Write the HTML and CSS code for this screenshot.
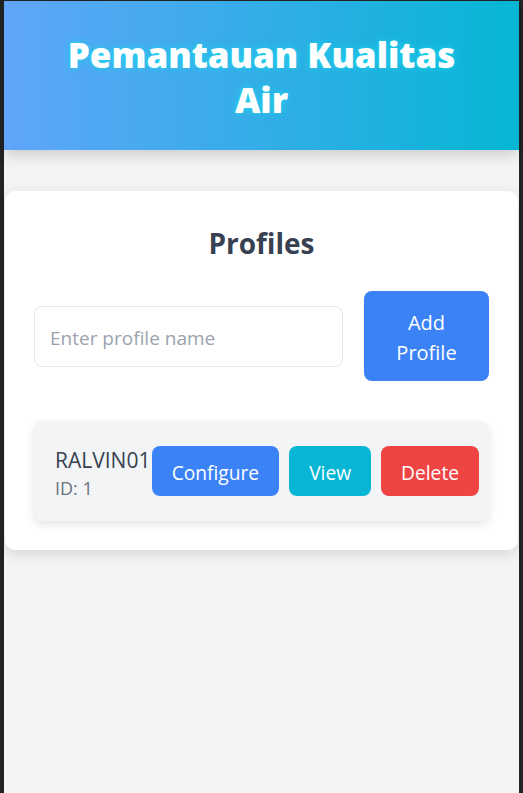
FILE: index.html
```html
<!DOCTYPE html>
<html lang="id">
<head>
<meta charset="utf-8">
<title>Pemantauan Kualitas Air</title>
<link rel="stylesheet" href="styles.css">
</head>
<body>
<div class="screen">
  <header class="header">
    <h1 class="title">Pemantauan Kualitas Air</h1>
  </header>
  <main class="main">
    <section class="card">
      <h2 class="card-title">Profiles</h2>
      <div class="add-row">
        <input class="name-input" type="text" placeholder="Enter profile name">
        <button class="btn btn-blue add-btn">Add Profile</button>
      </div>
      <ul class="profile-list">
        <li class="profile-item">
          <div class="profile-info">
            <div class="profile-name">RALVIN01</div>
            <div class="profile-id">ID: 1</div>
          </div>
          <div class="profile-actions">
            <button class="btn btn-blue">Configure</button>
            <button class="btn btn-cyan">View</button>
            <button class="btn btn-red">Delete</button>
          </div>
        </li>
      </ul>
    </section>
  </main>
</div>
</body>
</html>
```
FILE: styles.css
```css
* { box-sizing: border-box; }
html, body { margin: 0; padding: 0; height: 100%; }
body {
  background: #232323;
  font-family: "Open Sans", "Noto Sans", sans-serif;
}
.screen {
  margin: 1px 4px 0 4px;
  min-height: calc(100% - 1px);
  background: #f3f4f6;
}
.header {
  background: linear-gradient(90deg, #60a5fa 0%, #06b6d4 100%);
  padding: 31px 50px 28px;
  box-shadow: 0 4px 14px rgba(0, 0, 0, 0.18);
  position: relative;
}
.title {
  margin: 0;
  text-align: center;
  color: #ffffff;
  font-size: 35px;
  line-height: 45px;
  font-weight: 800;
  text-shadow: 0 0 8px rgba(34, 211, 238, 0.9), 0 0 3px rgba(34, 211, 238, 0.8);
}
.main {
  padding: 41px 1px 0;
}
.card {
  background: #ffffff;
  border-radius: 10px;
  padding: 33px 29px 29px;
  box-shadow: 0 4px 14px rgba(0, 0, 0, 0.12);
}
.card-title {
  margin: 0 0 29px;
  text-align: center;
  color: #374151;
  font-size: 28px;
  line-height: 38px;
  font-weight: 700;
}
.add-row {
  display: flex;
  align-items: center;
  gap: 21px;
}
.name-input {
  flex: 1;
  min-width: 0;
  height: 61px;
  border: 1px solid #e5e7eb;
  border-radius: 8px;
  padding: 3px 15px 0;
  font-family: inherit;
  font-size: 19px;
  color: #374151;
  background: #fff;
  outline: none;
}
.name-input::placeholder { color: #9ca3af; }
.btn {
  border: none;
  border-radius: 8px;
  color: #ffffff;
  font-family: inherit;
  font-size: 20px;
  line-height: 30px;
  padding: 12px 20px 8px;
  cursor: pointer;
}
.btn-blue { background: #3b82f6; }
.btn-cyan { background: #06b6d4; }
.btn-red { background: #ef4444; }
.add-btn {
  width: 125px;
  flex: none;
  padding: 17px 20px 13px;
}
.profile-list {
  list-style: none;
  margin: 40px 0 0;
  padding: 0;
}
.profile-item {
  display: flex;
  align-items: center;
  justify-content: space-between;
  height: 100px;
  padding: 0 10px 0 21px;
  background: #f3f4f6;
  border-radius: 8px;
  box-shadow: 0 4px 10px rgba(0, 0, 0, 0.1);
}
.profile-info {
  flex: none;
  padding-top: 6px;
}
.profile-name {
  font-size: 21px;
  line-height: 28px;
  color: #374151;
}
.profile-id {
  font-size: 18px;
  line-height: 28px;
  color: #6b7280;
}
.profile-actions {
  display: flex;
  gap: 10px;
}
.profile-actions .btn {
  height: 50px;
  font-size: 19.2px;
  padding: 12px 20px 8px;
}
```
